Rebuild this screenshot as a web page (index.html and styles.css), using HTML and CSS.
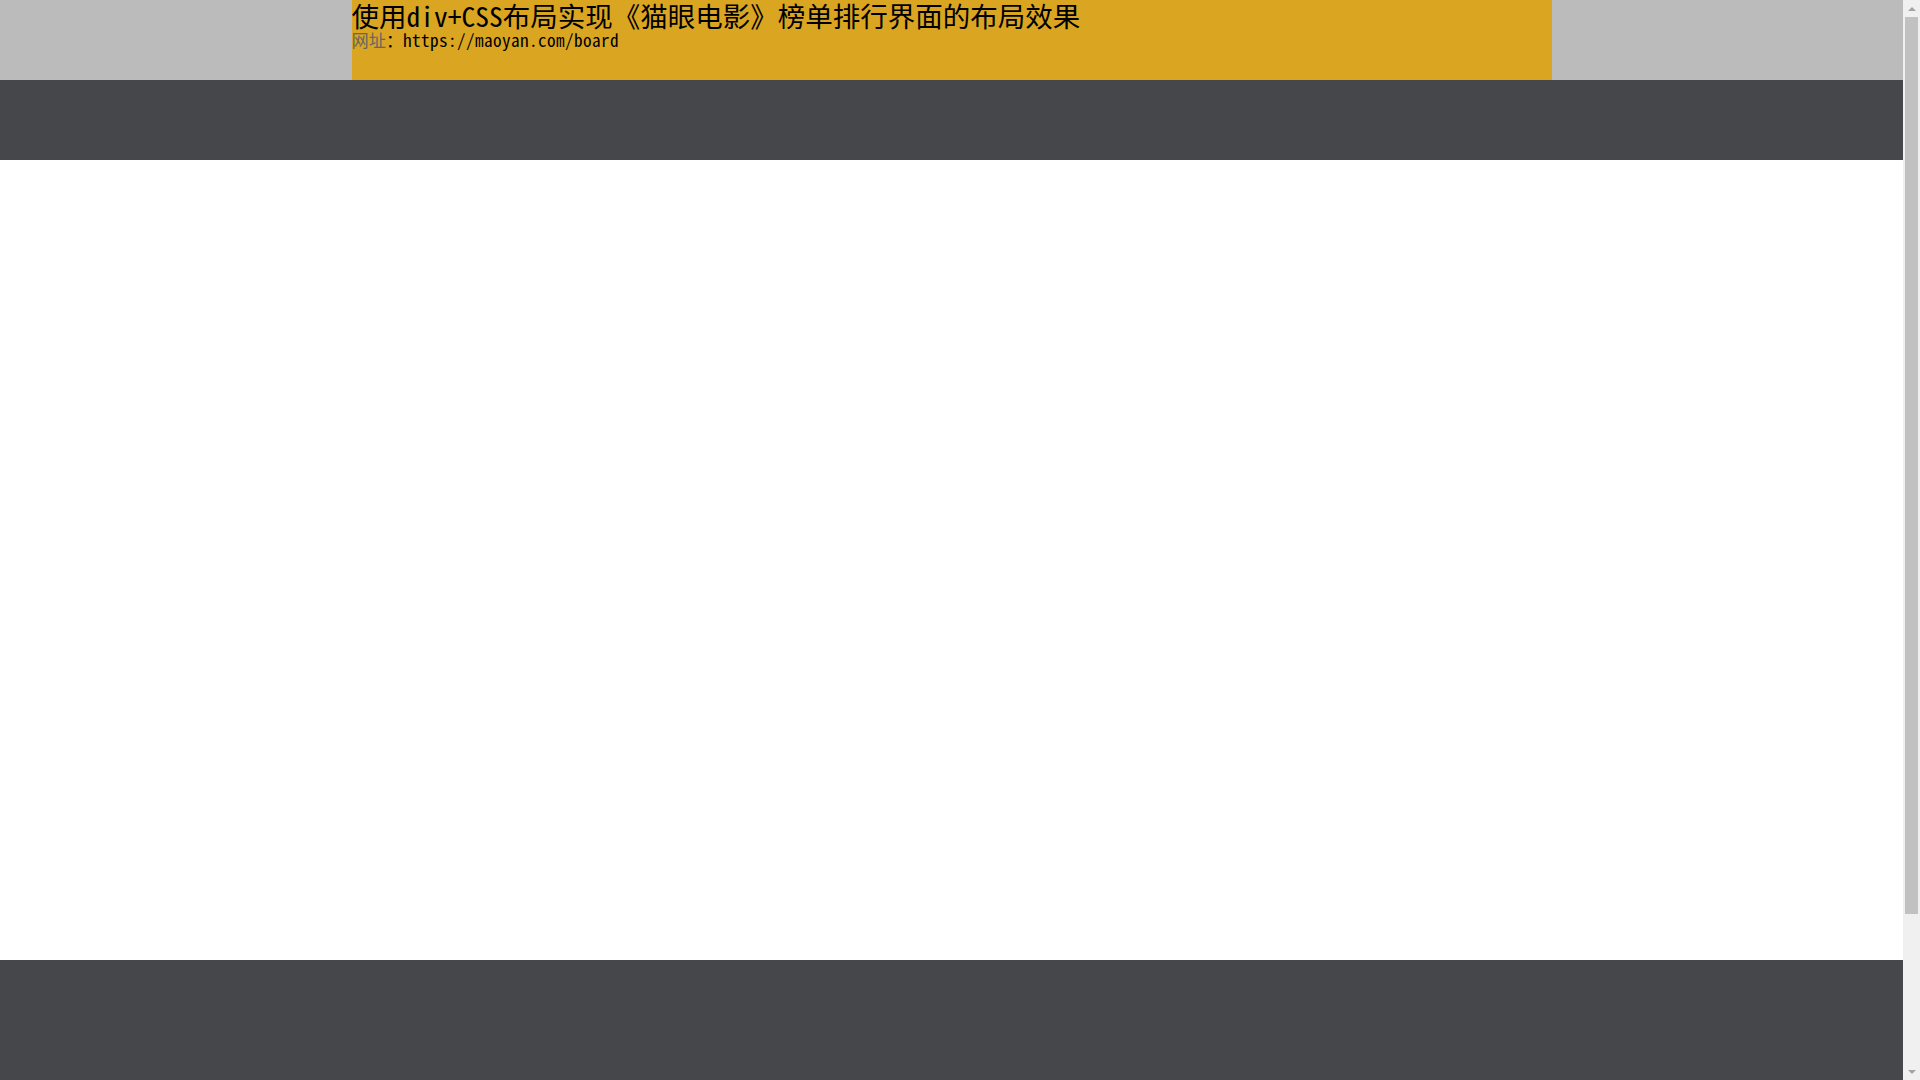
FILE: index.html
```html
<!DOCTYPE html>
<html lang="zh-CN">
<head>
<meta charset="utf-8">
<title>猫眼电影 榜单</title>
<link rel="stylesheet" href="styles.css">
</head>
<body>
<div class="page">
  <div class="top">
    <div class="top-inner">
      <div class="title">使用div+CSS布局实现《猫眼电影》榜单排行界面的布局效果</div>
      <div class="url"><span class="label">网址</span>：<span class="link">https://maoyan.com/board</span></div>
    </div>
  </div>
  <div class="nav"></div>
  <div class="main"></div>
  <div class="footer"></div>
</div>
<div class="vscroll" aria-hidden="true">
  <div class="arrow arrow-up"></div>
  <div class="track"><div class="thumb"></div></div>
  <div class="arrow arrow-down"></div>
</div>
</body>
</html>
```
FILE: styles.css
```css
html, body {
  margin: 0;
  padding: 0;
}
body {
  font-family: "Noto Sans Mono CJK SC", "Noto Sans CJK SC", "Liberation Mono", monospace;
  color: #000;
  background: #fff;
}
.page {
  margin-right: 17px;
}
.top {
  background: #bbbbbb;
  height: 80px;
}
.top-inner {
  width: 1200px;
  height: 80px;
  margin: 0 auto;
  background: #daa520;
}
.title {
  font-size: 27.5px;
  line-height: 31px;
}
.url {
  font-size: 17.2px;
  line-height: 18px;
}
.label {
  color: #666;
}
.link {
  letter-spacing: 0.4px;
}
.nav {
  background: #46474b;
  height: 80px;
}
.main {
  height: 800px;
  background: #fff;
}
.footer {
  background: #46474b;
  height: 300px;
}

/* faux browser scrollbar */
.vscroll {
  position: fixed;
  top: 0;
  right: 0;
  width: 17px;
  height: 100vh;
  background: #f0f0f0;
  display: flex;
  flex-direction: column;
}
.arrow {
  height: 17px;
  display: flex;
  align-items: center;
  justify-content: center;
}
.arrow-up::before {
  content: "";
  border-left: 4px solid transparent;
  border-right: 4px solid transparent;
  border-bottom: 4px solid #a3a3a3;
}
.arrow-down::before {
  content: "";
  border-left: 4px solid transparent;
  border-right: 4px solid transparent;
  border-top: 4px solid #a3a3a3;
}
.track {
  flex: 1;
  padding: 0 2px;
}
.thumb {
  height: 897px;
  background: #c1c1c1;
}
```
